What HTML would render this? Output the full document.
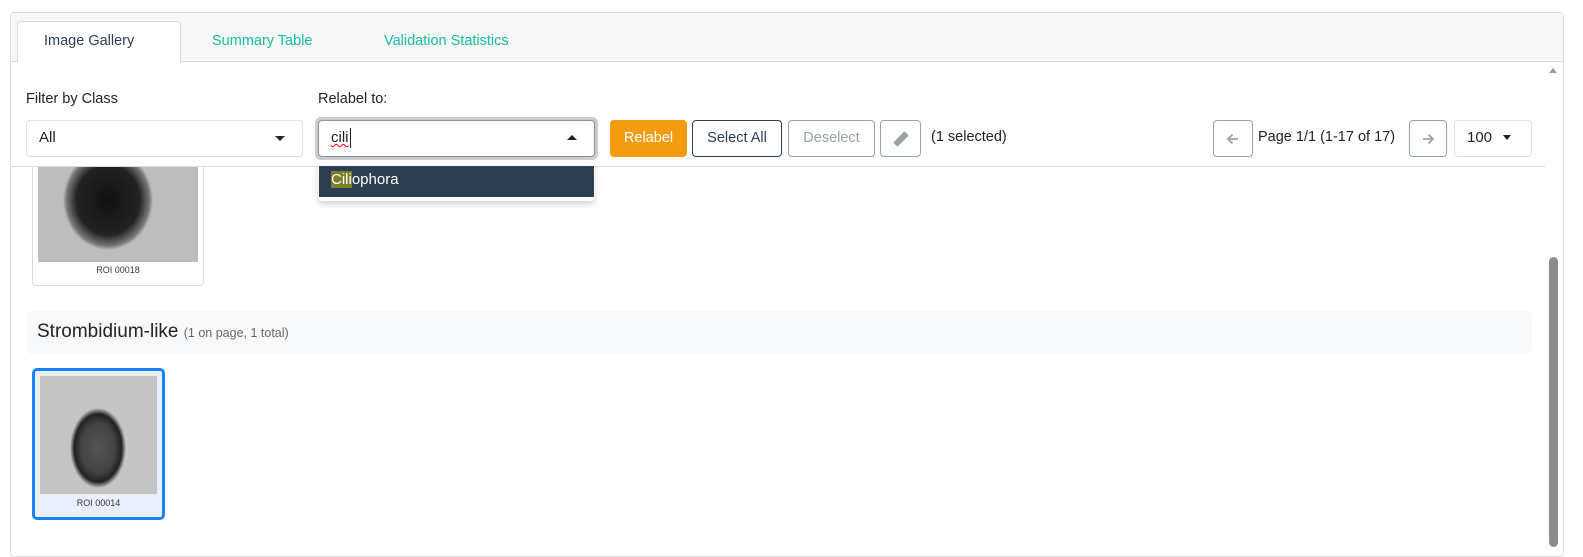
<!DOCTYPE html>
<html><head><style>
*{box-sizing:border-box;margin:0;padding:0}
body{width:1583px;height:544px;background:#fff;font-family:"Liberation Sans",sans-serif;font-size:15px;color:#222;position:relative;overflow:hidden}
.a{position:absolute}
.panel{left:10px;top:12px;width:1554px;height:545px;border:1px solid #ddd;border-radius:4px}
.tabbar{left:11px;top:13px;width:1552px;height:49px;background:#f7f7f7;border-bottom:1px solid #ddd}
.tab{top:21px;height:42px;line-height:40px;font-size:14.5px}
.btn{top:120px;height:37px;border:1px solid #95a5a6;border-radius:4px;font-size:14.5px;line-height:35px;text-align:center;color:#2c3e50;background:#fff}
.sel{top:120px;height:37px;border:1px solid #dee2e6;border-radius:4px;background:#fff}
.car{width:0;height:0;border-left:5px solid transparent;border-right:5px solid transparent}
</style></head><body>
<div class="a panel"></div>
<div class="a tabbar"></div>
<div class="a" style="left:17px;top:21px;width:164px;height:42px;background:#fff;border:1px solid #ddd;border-bottom:none;border-radius:4px 4px 0 0"></div>
<div class="a tab" style="left:44px;color:#2c3e50">Image Gallery</div>
<div class="a tab" style="left:212px;color:#18bc9c">Summary Table</div>
<div class="a tab" style="left:384px;color:#18bc9c">Validation Statistics</div>

<div class="a" style="left:1545px;top:63px;width:17px;height:481px;background:#fff"></div>
<div class="a car" style="left:1549px;top:68px;border-bottom:5px solid #999;border-left-width:4px;border-right-width:4px"></div>
<div class="a" style="left:1549px;top:257px;width:9px;height:290px;background:#8c8c8c;border-radius:5px"></div>

<div class="a" style="left:32px;top:150px;width:172px;height:136px;border:1px solid #ddd;border-radius:4px;background:#fff"></div>
<div class="a" style="left:38px;top:150px;width:160px;height:112px;background:radial-gradient(ellipse 45px 50px at 70px 50px,#111 0,#222 70%,#777 92%,#bdbdbd 100%),#bdbdbd"></div>
<div class="a" style="left:32px;top:265px;width:172px;text-align:center;font-size:9px;color:#333">ROI 00018</div>

<div class="a" style="left:27px;top:311px;width:1505px;height:43px;background:#f8f9fa;border-radius:5px"></div>
<div class="a" style="left:37px;top:321px;font-size:19px;color:#222">Strombidium-like <span style="font-size:12.5px;color:#666">(1 on page, 1 total)</span></div>
<div class="a" style="left:32px;top:368px;width:133px;height:152px;border:3px solid #1a82fb;border-radius:5px;background:#e8f0fd"></div>
<div class="a" style="left:40px;top:376px;width:117px;height:118px;background:radial-gradient(ellipse 28px 40px at 58px 72px,#555 0,#444 60%,#222 85%,#c4c4c4 100%),#c4c4c4"></div>
<div class="a" style="left:32px;top:498px;width:133px;text-align:center;font-size:9px;color:#333">ROI 00014</div>

<div class="a" style="left:11px;top:63px;width:1534px;height:104px;background:#fff;border-bottom:1px solid #ddd"></div>
<div class="a" style="left:26px;top:91px;font-size:14.5px">Filter by Class</div>
<div class="a" style="left:318px;top:91px;font-size:14.5px">Relabel to:</div>
<div class="a sel" style="left:26px;width:277px"></div>
<div class="a" style="left:39px;top:129px;font-size:15px">All</div>
<div class="a car" style="left:275px;top:136px;border-top:5px solid #222"></div>
<div class="a" style="left:315px;top:117px;width:283px;height:43px;border-radius:6px;background:#c8cdd2"></div>
<div class="a" style="left:318px;top:120px;width:277px;height:37px;background:#fff;border:1px solid #8a9299;border-radius:4px"></div>
<div class="a" style="left:331px;top:129px;font-size:15px;text-decoration:underline wavy red;text-decoration-thickness:1px">cili</div>
<div class="a" style="left:350px;top:128px;width:1px;height:20px;background:#222"></div>
<div class="a car" style="left:567px;top:135px;border-bottom:5px solid #222"></div>
<div class="a" style="left:318px;top:162px;width:277px;height:39px;background:#fff;border-radius:4px;box-shadow:0 3px 6px rgba(0,0,0,.18)"></div>
<div class="a" style="left:319px;top:166px;width:275px;height:31px;background:#2c3e50"></div>
<div class="a" style="left:331px;top:171px;font-size:15px;color:#fff"><span style="background:#7a7f2a">Cili</span>ophora</div>

<div class="a btn" style="left:610px;width:77px;background:#f39c12;border-color:#f39c12;color:#fff">Relabel</div>
<div class="a btn" style="left:692px;width:90px;border-color:#2c3e50">Select All</div>
<div class="a btn" style="left:788px;width:87px;color:#95a5a6">Deselect</div>
<div class="a btn" style="left:880px;width:41px"><svg width="18" height="18" viewBox="0 0 18 18" style="margin-top:9px"><rect x="6" y="1" width="6" height="16" rx="1" fill="#95a5a6" transform="rotate(45 9 9)"/></svg></div>
<div class="a" style="left:931px;top:129px;font-size:14.5px">(1 selected)</div>
<div class="a btn" style="left:1213px;width:40px"><svg width="14" height="14" viewBox="0 0 14 14" style="margin-top:11px"><path d="M12 7H2M6.5 2.5L2 7l4.5 4.5" stroke="#95a5a6" stroke-width="1.8" fill="none"/></svg></div>
<div class="a" style="left:1258px;top:129px;font-size:14.5px">Page 1/1 (1-17 of 17)</div>
<div class="a btn" style="left:1409px;width:38px"><svg width="14" height="14" viewBox="0 0 14 14" style="margin-top:11px"><path d="M2 7h10M7.5 2.5L12 7l-4.5 4.5" stroke="#95a5a6" stroke-width="1.8" fill="none"/></svg></div>
<div class="a sel" style="left:1454px;width:78px"></div>
<div class="a" style="left:1467px;top:129px;font-size:15px">100</div>
<div class="a car" style="left:1503px;top:135px;border-top:5px solid #222;border-left-width:4px;border-right-width:4px"></div>
</body></html>
